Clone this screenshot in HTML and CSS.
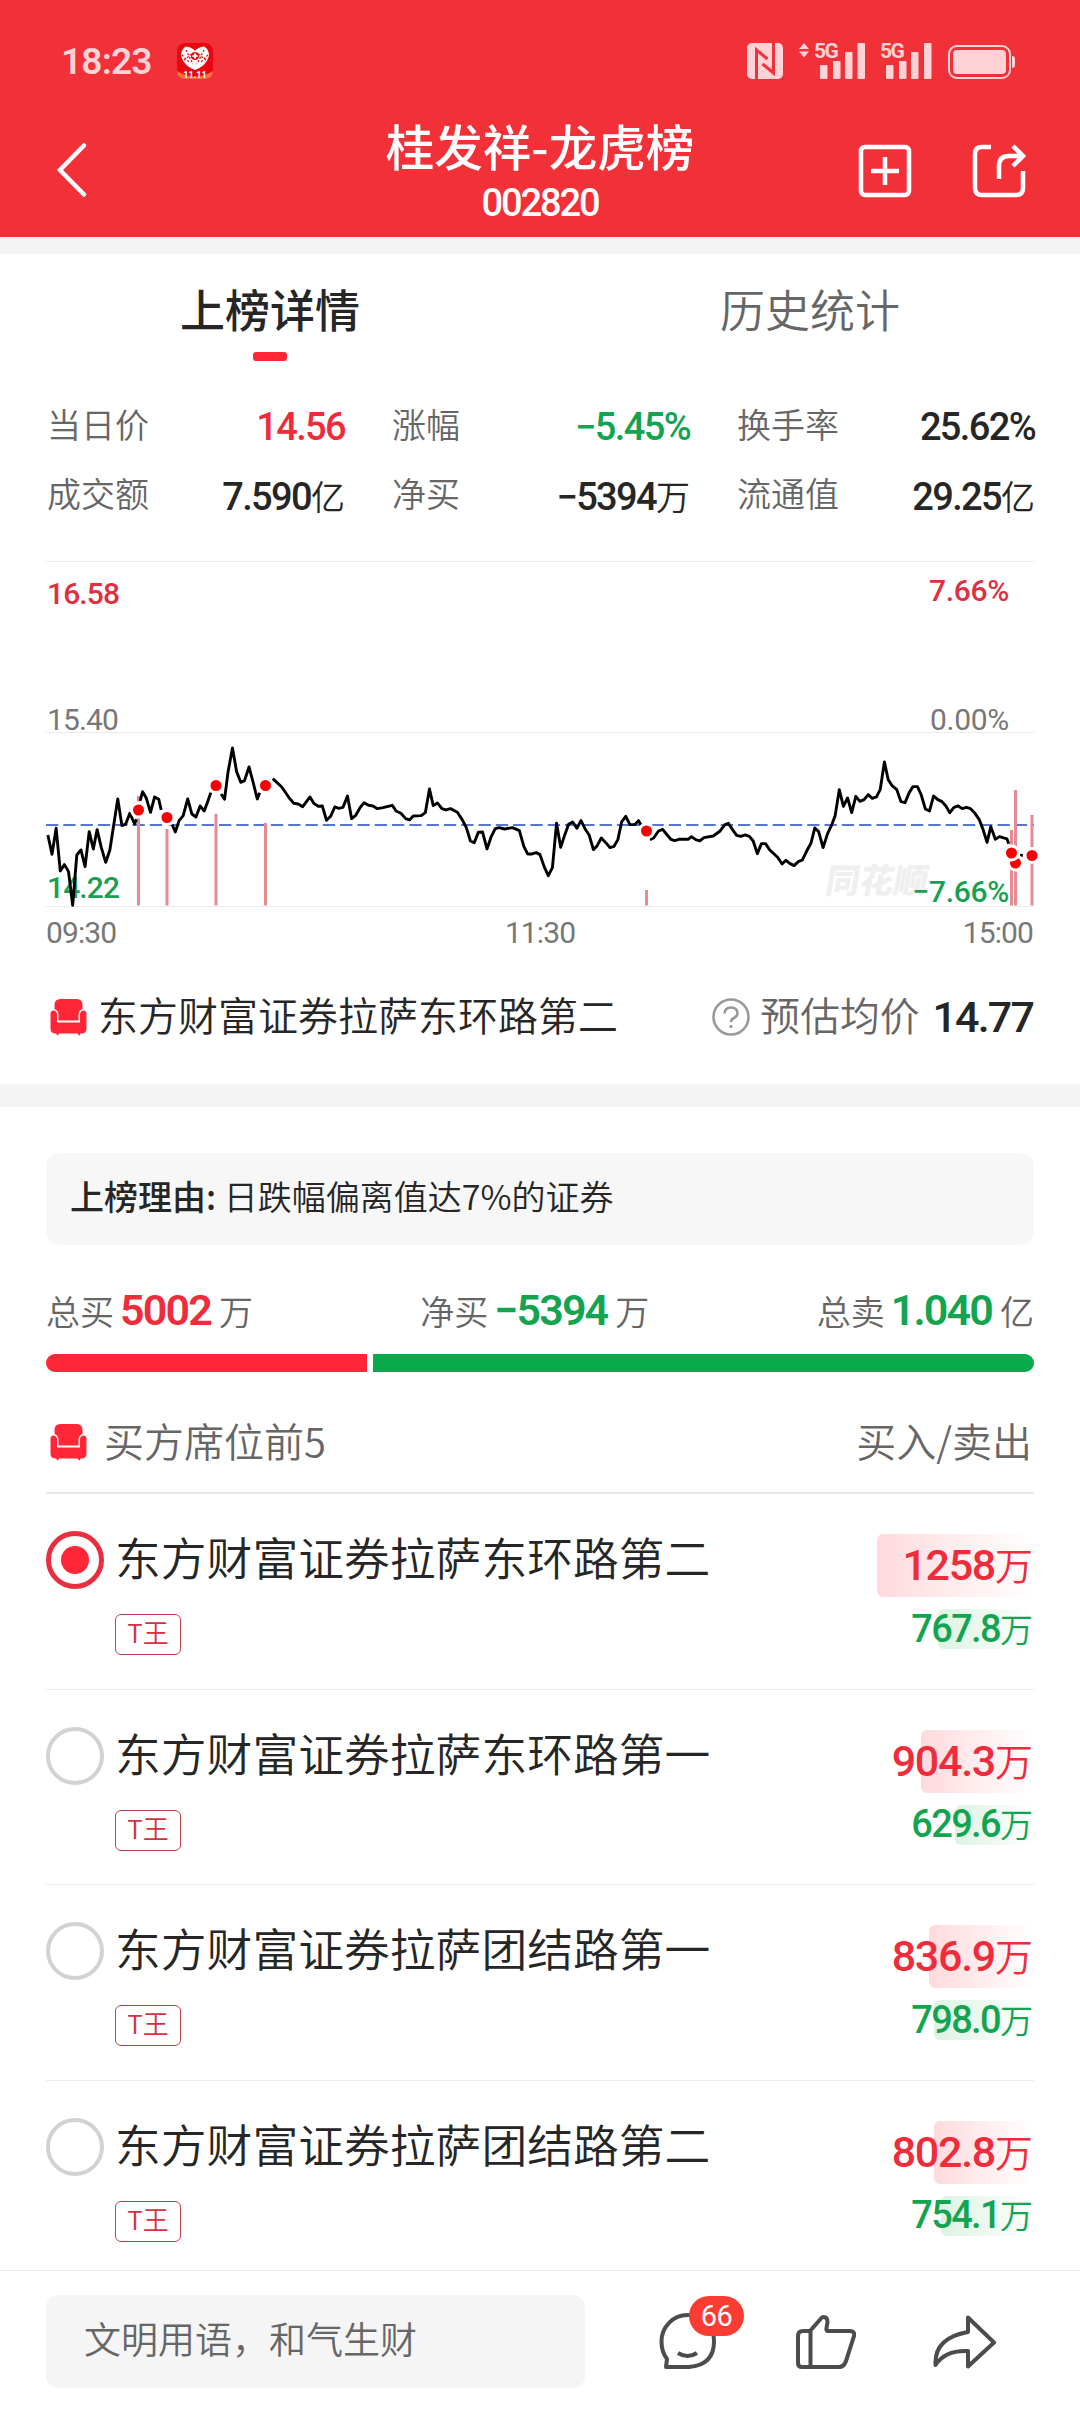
FILE: index.html
```html
<!DOCTYPE html>
<html lang="zh-CN">
<head>
  <meta charset="UTF-8" />
  <meta name="viewport" content="width=device-width, initial-scale=1.0"/>
  <title>桂发祥-龙虎榜</title>
  <link rel="stylesheet" href="styles.css">
</head>
<body>

  <svg class="symbols" width="0" height="0">
    <symbol id="seat" viewBox="0 0 37 38">
      <path d="M4.500 11V7q0-6 6-6h16q6 0 6 6v4q-4 1.500-4 6v5.500h-20V17q0-4.500-4-6z"/>
      <path d="M.5 16q0-3.500 3-3.500T7 16v8.500h23V16q.5-3.500 3.500-3.500t3 3.500v14.500q0 5-5 5h-1l-.6 1.800h-1.400l-.6-1.800h-19l-.6 1.800H6.900L6.300 35.500h-.8q-5 0-5-5z"/>
    </symbol>
  </svg>

  <header>
    <div class="status-bar">
      <div class="status-left">
        <span class="clock">18:23</span>
        <svg width="36" height="36" viewBox="0 0 36 36">
          <rect width="36" height="36" rx="8" fill="#ea0610"/>
          <path d="M0 28q18 11 36 0v1q-1 7-8 7H8q-7 0-8-7z" fill="#ff6d3c"/>
          <path d="M9 3.500Q15 4 18 8q3-4 9-4.500Q32 6 32 13q-3 10-14 14Q7 23 4 13 4 6 9 3.500z" fill="#fff"/>
          <path d="M5 12l8 8M9 7l7 14M27 7l-7 14M31 12l-8 8M7 17l9-7M29 17l-9-7" stroke="#ea0610" stroke-width="1.300" stroke-dasharray="2 1.800"/>
          <circle cx="18" cy="13" r="4" fill="#ea0610"/>
          <path d="M18 10.500v5M15.500 13h5" stroke="#fff" stroke-width="2"/>
          <text x="18" y="35" text-anchor="middle" class="app-date">11.11</text>
        </svg>
      </div>
      <div class="status-right">
        <svg width="270" height="56" viewBox="746 34 270 56" fill="#ffd2d5">
          <rect x="747" y="44" width="36" height="36" rx="5"/>
          <path d="M756.500 80V51l11 9M773.500 44v30l-11-9" fill="none" stroke="#f23038" stroke-width="3"/>
          <path d="M799 50l5-6 5 6zM799 52.500h10l-5 6z"/>
          <text x="814" y="59" class="net">5G</text>
          <rect x="820" y="66" width="7.500" height="14" rx="1"/>
          <rect x="833" y="62" width="7.500" height="18" rx="1"/>
          <rect x="845" y="53" width="7.500" height="27" rx="1"/>
          <rect x="857.500" y="44" width="7.500" height="36" rx="1"/>
          <text x="880" y="59" class="net">5G</text>
          <rect x="886" y="66" width="7.500" height="14" rx="1"/>
          <rect x="899" y="62" width="7.500" height="18" rx="1"/>
          <rect x="911" y="53" width="7.500" height="27" rx="1"/>
          <rect x="924" y="44" width="7.500" height="36" rx="1"/>
          <rect x="949" y="47" width="61" height="32" rx="8" fill="none" stroke="#ffd2d5" stroke-width="2"/>
          <rect x="953" y="51" width="53" height="24" rx="4"/>
          <path d="M1012 57q3 0 3 3v6q0 3-3 3z"/>
        </svg>
      </div>
    </div>
    <div class="nav">
      <svg class="back" width="32" height="56" viewBox="0 0 32 56"><path d="M28 3.500L4 28l24 24.500"/></svg>
      <div class="nav-title">
        <h1>桂发祥-龙虎榜</h1>
        <span class="num code">002820</span>
      </div>
      <div class="nav-actions">
        <svg width="54" height="54" viewBox="0 0 54 54">
          <rect x="3" y="3" width="48" height="48" rx="4"/>
          <path d="M27 13v28M13 27h28"/>
        </svg>
        <svg width="56" height="54" viewBox="0 0 56 54">
          <path d="M19 3H10Q3 3 3 10v34q0 7 7 7h34q7 0 7-7V27"/>
          <path d="M27 35V22q0-10 10-10h13M41 2l10 10-10 10"/>
        </svg>
      </div>
    </div>
  </header>

  <main>
    <div class="tabs">
      <div class="tab active">上榜详情</div>
      <div class="tab">历史统计</div>
    </div>

    <div class="stats">
      <div class="stat"><label>当日价</label><span class="num red">14.56</span></div>
      <div class="stat"><label>涨幅</label><span class="num green">−5.45%</span></div>
      <div class="stat"><label>换手率</label><span class="num">25.62%</span></div>
      <div class="stat"><label>成交额</label><span class="num">7.590<i>亿</i></span></div>
      <div class="stat"><label>净买</label><span class="num">−5394<i>万</i></span></div>
      <div class="stat"><label>流通值</label><span class="num">29.25<i>亿</i></span></div>
    </div>

    <svg class="chart" width="1080" height="395" viewBox="0 555 1080 395">
      <path class="grid" d="M46 561.500H1034M46 732.500H1034M46 906.500H1034"/>
      <text class="watermark" transform="translate(824 893) skewX(-10)">同花顺</text>
      <g class="axis">
        <text x="47" y="603.500" class="up">16.58</text>
        <text x="47" y="729.500">15.40</text>
        <text x="47" y="898" class="down">14.22</text>
        <text x="1009" y="601" text-anchor="end" class="up percent">7.66%</text>
        <text x="1009" y="729.500" text-anchor="end" class="percent">0.00%</text>
        <text x="1009" y="901.500" text-anchor="end" class="down percent">−7.66%</text>
        <text x="46" y="942.500">09:30</text>
        <text x="540" y="942.500" text-anchor="middle">11:30</text>
        <text x="1033" y="942.500" text-anchor="end">15:00</text>
      </g>
      <path class="avg" d="M46 825H1034"/>
      <path class="deal" d="M138.500 796V905.500M167 829V905.500M216 814V905.500M265.500 823V905.500M646.500 890V905.500M1011.500 830V905.500M1015.500 790V905.500M1032 815V905.500"/>
      <!-- morning session -->
      <g transform="translate(0 550) scale(.3444 .3333)">
        <polyline class="price" points="139,855 151,913 163,835 175,963 187,944 199,965 211,1066 223,915 235,900 247,950 259,845 271,897 282,839 294,892 307,937 319,900 331,820 342,747 354,827 365,822 377,790 391,822 396,808"/>
        <polyline class="price" points="407,753 414,725 425,745 437,787 449,741 461,748 468,780"/>
        <polyline class="price" points="500,824 509,846 520,812 532,797 545,747 557,792 569,801 581,768 593,783 604,752 612,728"/>
        <polyline class="price" points="642,732 652,748 662,667 675,594 687,665 699,697 710,692 723,651 735,697 747,747 754,728"/>
        <polyline class="price" points="792,686 818,711 840,744 853,760 866,762 879,770 900,741 912,761 924,769 936,768 948,811 960,799 972,771 984,775 996,772 1009,738 1021,806 1033,796 1045,774 1057,758 1070,766 1083,768 1096,776 1112,773 1139,766 1150,783 1164,790 1178,806 1189,810 1200,798 1223,797 1235,788 1247,717 1258,767 1270,759 1283,776 1295,780 1308,776 1328,787 1342,809 1354,833 1366,873 1377,878 1389,847 1401,846 1414,897 1426,861 1438,836 1450,833 1465,837 1488,833 1508,842 1521,889 1532,912 1545,912 1557,908 1568,914 1580,950 1592,977 1604,953 1616,820 1628,892 1640,854 1651,823 1663,816 1675,835 1687,812 1699,837 1711,856 1723,899 1734,887 1746,864 1759,878 1771,893 1783,889 1794,869 1805,816 1817,799 1829,824 1843,824 1854,812 1861,824"/>
      </g>
      <!-- afternoon session -->
      <g transform="translate(540 550) scale(.3444 .3333)">
        <polyline class="price" points="319,869 330,864 344,843 356,838 367,852 380,868 391,872 404,868 430,868 440,860 452,869 464,873 476,863 503,858 523,843 537,824 547,820 559,839 571,856 583,859 596,855 608,859 619,873 631,911 643,881 655,881 667,900 690,922 703,942 714,931 726,941 738,947 750,935 762,930 774,904 787,879 798,834 809,845 822,893 835,851 846,827 857,797 869,719 881,769 893,744 905,788 917,739 929,754 941,749 953,734 965,745 977,741 988,718 1000,636 1011,689 1023,708 1036,719 1048,755 1060,758 1072,728 1083,710 1096,710 1107,735 1119,777 1131,783 1143,738 1155,749 1166,754 1178,767 1190,788 1202,772 1214,768 1226,776 1238,772 1250,776 1263,790 1275,808 1287,840 1298,877 1309,830 1322,868 1334,860 1356,867 1361,881"/>
        <path class="price" d="M1394,916h8"/>
      </g>
      <g class="dots">
        <circle cx="138.500" cy="810" r="7"/>
        <circle cx="167" cy="817.500" r="7"/>
        <circle cx="216" cy="785.500" r="7"/>
        <circle cx="265.500" cy="785.500" r="7"/>
        <circle cx="646.500" cy="831" r="7"/>
        <circle cx="1015.500" cy="863" r="7"/>
        <circle cx="1011.500" cy="853" r="7"/>
        <circle cx="1032" cy="855.500" r="7"/>
      </g>
    </svg>

    <div class="picked">
      <svg class="seat-icon"><use href="#seat"/></svg>
      <span class="picked-name">东方财富证券拉萨东环路第二</span>
      <svg class="help" width="38" height="38" viewBox="0 0 38 38">
        <circle cx="19" cy="19" r="17.500"/>
        <path d="M12.500 15.500q.5-6 6.500-6t6.500 5.500q0 3-3.500 5-3 1.500-3 4M19 27v3"/>
      </svg>
      <span class="picked-label">预估均价</span>
      <b class="num">14.77</b>
    </div>

    <div class="reason"><b>上榜理由:</b> 日跌幅偏离值达7%的证券</div>

    <div class="totals">
      <div>总买<b class="num red">5002</b>万</div>
      <div>净买<b class="num green">−5394</b>万</div>
      <div>总卖<b class="num green">1.040</b>亿</div>
    </div>
    <div class="ratio">
      <span class="ratio-buy" style="width: 321px"></span>
      <span class="ratio-sell"></span>
    </div>

    <div class="list-head">
      <svg class="seat-icon"><use href="#seat"/></svg>
      <span>买方席位前5</span>
      <span class="list-head-right">买入/卖出</span>
    </div>

    <div class="seats">
      <div class="seat">
        <span class="radio checked"></span>
        <div class="seat-info">
          <h2>东方财富证券拉萨东环路第二</h2>
          <span class="tag">T王</span>
        </div>
        <div class="amounts">
          <div class="num buy"><span class="bar" style="width: 157px"></span><em>1258<i>万</i></em></div>
          <div class="num sell"><span class="bar" style="width: 96px"></span><em>767.8<i>万</i></em></div>
        </div>
      </div>
      <div class="seat">
        <span class="radio"></span>
        <div class="seat-info">
          <h2>东方财富证券拉萨东环路第一</h2>
          <span class="tag">T王</span>
        </div>
        <div class="amounts">
          <div class="num buy"><span class="bar" style="width: 113px"></span><em>904.3<i>万</i></em></div>
          <div class="num sell"><span class="bar" style="width: 79px"></span><em>629.6<i>万</i></em></div>
        </div>
      </div>
      <div class="seat">
        <span class="radio"></span>
        <div class="seat-info">
          <h2>东方财富证券拉萨团结路第一</h2>
          <span class="tag">T王</span>
        </div>
        <div class="amounts">
          <div class="num buy"><span class="bar" style="width: 105px"></span><em>836.9<i>万</i></em></div>
          <div class="num sell"><span class="bar" style="width: 100px"></span><em>798.0<i>万</i></em></div>
        </div>
      </div>
      <div class="seat">
        <span class="radio"></span>
        <div class="seat-info">
          <h2>东方财富证券拉萨团结路第二</h2>
          <span class="tag">T王</span>
        </div>
        <div class="amounts">
          <div class="num buy"><span class="bar" style="width: 100px"></span><em>802.8<i>万</i></em></div>
          <div class="num sell"><span class="bar" style="width: 93px"></span><em>754.1<i>万</i></em></div>
        </div>
      </div>
    </div>
  </main>

  <footer>
    <div class="comment-box">文明用语，和气生财</div>
    <div class="actions">
      <div class="action">
        <svg width="60" height="60" viewBox="0 0 60 60">
          <path d="M8 56l1-8Q3.500 41 3.500 30.500A26 26.500 0 0 1 30 4a26 26 0 0 1 26 26.500Q56 54 31 56z"/>
          <path d="M20 42q9.500 6 19 0"/>
        </svg>
        <span class="badge">66</span>
      </div>
      <svg width="60" height="56" viewBox="0 0 60 56">
        <path d="M14 17h-7q-5 0-5 5v27q0 4 4 4h37q5 0 7-6l8-25q1-5-4-5H32q-2 0-1.500-3l1-6q0-5-4-5Q26 3 25 4.500L14 17M14.500 17v36"/>
      </svg>
      <svg width="64" height="56" viewBox="0 0 64 56">
        <path d="M35 3.500L61 28.500 35 52.500V37Q12 36 2.500 51 1 24 35 18z"/>
      </svg>
    </div>
  </footer>

</body>
</html>
```
FILE: styles.css
```css
* { box-sizing: border-box; }

body {
  margin: 0;
  width: 1080px;
  height: 2412px;
  display: flex;
  flex-direction: column;
  overflow: hidden;
  font-family: "Noto Sans CJK SC", sans-serif;
  font-weight: 350;
  background: #fff;
  color: #262626;
}

h1, h2 { margin: 0; }
i, em { font-style: normal; }
svg { display: block; flex: none; }
.symbols { position: absolute; }

.num, .clock, .badge, svg text {
  font-family: Roboto, "Noto Sans CJK SC", sans-serif;
}
.num {
  font-weight: 500;
  letter-spacing: -0.043em;
}
.num i {
  font-weight: 350;
  letter-spacing: 0;
}
.red { color: #ee2c3c; }
.green { color: #12a451; }

/* header */
header {
  height: 237px;
  background: #f23038;
  color: #fff;
}

.status-bar {
  height: 122px;
  padding: 0 64px 0 61px;
  display: flex;
  align-items: center;
  justify-content: space-between;
}
.status-left {
  display: flex;
  align-items: center;
  gap: 24px;
}
.clock {
  font-size: 37px;
  font-weight: 600;
  width: 92px;
  letter-spacing: -0.800px;
  color: #ffd2d5;
}
.app-date {
  font-size: 9px;
  font-weight: 700;
  fill: #fff;
}
.net {
  font-size: 21px;
  font-weight: 700;
  letter-spacing: -1.500px;
}

.nav {
  height: 115px;
  display: grid;
  grid-template-columns: 250px 1fr 250px;
  padding: 0 26px 0 56px;
}
.nav svg {
  fill: none;
  stroke: #fff;
  stroke-width: 4.500;
}
.back {
  margin-top: 20px;
}
.back path { stroke-linecap: round; }
.nav-title {
  display: flex;
  flex-direction: column;
  align-items: center;
  margin: 0 -30px 0 -60px;
}
h1 {
  font-size: 48.500px;
  font-weight: 500;
  line-height: 60px;
  margin: -7px 0 3px;
  white-space: nowrap;
}
.code {
  font-size: 38px;
  line-height: 50px;
  letter-spacing: -0.055em;
}
.nav-actions {
  display: flex;
  justify-content: flex-end;
  gap: 60px;
  padding: 22px 26px 0 0;
}

/* tabs */
main {
  flex: 1;
  min-height: 0;
  overflow: hidden;
  border-top: 17px solid #f4f4f4;
}
.tabs {
  display: flex;
  height: 138px;
}
.tab {
  flex: 1;
  display: flex;
  flex-direction: column;
  align-items: center;
  padding-top: 25px;
  font-size: 45px;
  line-height: 60px;
  color: #666;
}
.tab.active {
  font-weight: 500;
  color: #262626;
}
.tab.active::after {
  content: "";
  width: 34px;
  height: 9px;
  margin-top: 13px;
  border-radius: 3px;
  background: #ff2638;
}

/* quote numbers */
.stats {
  display: grid;
  grid-template-columns: repeat(3, 299px);
  column-gap: 46px;
  padding: 0 46px;
}
.stat {
  height: 69px;
  display: flex;
  align-items: center;
  justify-content: space-between;
  font-size: 38px;
}
.stat label {
  padding: 0 0 6px 1px;
  font-size: 34px;
  line-height: 50px;
  color: #666;
}
.stat i { font-size: 34px; }

/* intraday chart */
.chart {
  margin-top: 25px;
}
.grid { stroke: #ececec; }
.axis text {
  font-size: 30px;
  font-weight: 400;
  letter-spacing: -0.900px;
  fill: #777;
}
.axis .up { fill: #e02f3f; font-weight: 500; }
.axis .down { fill: #1a9f52; font-weight: 500; }
.axis .percent { letter-spacing: -0.300px; }
.watermark {
  font-size: 34px;
  font-weight: 900;
  fill: #efefef;
}
.avg {
  stroke: #5477d3;
  stroke-width: 2;
  stroke-dasharray: 12.300 5;
}
.deal {
  stroke: #e88a92;
  stroke-width: 3;
}
.price {
  fill: none;
  stroke: #000;
  stroke-width: 2.900;
  stroke-linejoin: round;
  vector-effect: non-scaling-stroke;
}
.dots circle {
  fill: #f80000;
  stroke: #fff;
  stroke-width: 3;
}

.seat-icon {
  width: 37px;
  height: 38px;
  fill: #ff2638;
}
.picked {
  box-sizing: content-box;
  height: 134px;
  padding: 0 47px 0 50px;
  margin-bottom: 46px;
  border-bottom: 23px solid #f4f4f4;
  display: flex;
  align-items: center;
  font-size: 40px;
  line-height: 60px;
}
.picked-name {
  margin: 0 auto 0 11px;
  padding-bottom: 6px;
}
.picked-label {
  margin: 0 13px 0 10px;
  padding-bottom: 6px;
  font-size: 39.800px;
  color: #666;
}
.picked b { font-size: 43px; }
.help {
  fill: none;
  stroke: #999;
  stroke-width: 2.600;
}

/* reason + totals */
.reason {
  margin: 0 46px;
  height: 92px;
  padding-left: 24px;
  line-height: 86px;
  border-radius: 14px;
  background: #f7f7f7;
  font-size: 34px;
}
.reason b { font-weight: 500; }
.totals {
  height: 109px;
  padding: 25px 46px 0;
  display: flex;
  justify-content: space-between;
  font-size: 34px;
  line-height: 80px;
  color: #666;
}
.totals b {
  margin: 0 8px 0 6px;
  font-size: 43px;
  font-weight: 600;
}
.ratio {
  margin: 0 46px;
  height: 18px;
  display: flex;
  gap: 6px;
}
.ratio-buy {
  background: #ff2638;
  border-radius: 9px 0 0 9px;
}
.ratio-sell {
  flex: 1;
  background: #09aa4b;
  border-radius: 0 9px 9px 0;
}

/* seat list */
.list-head {
  margin: 0 46px;
  height: 122px;
  padding: 20px 2px 0 4px;
  border-bottom: 2px solid #e7e7e7;
  display: flex;
  align-items: center;
  gap: 17px;
  font-size: 40px;
  line-height: 60px;
  color: #666;
}
.list-head span { padding-bottom: 5px; }
.list-head-right { margin-left: auto; }

.seats { margin: 0 46px; }
.seat {
  height: 195.670px;
  padding-top: 34px;
  border-bottom: 1px solid #ececec;
  display: flex;
  align-items: flex-start;
}
.radio {
  width: 58px;
  height: 58px;
  margin-top: 3px;
  border: 4px solid #d2d2d2;
  border-radius: 50%;
}
.radio.checked {
  border: 5px solid #e92f3f;
  padding: 10px;
  background: #ff2638;
  background-clip: content-box;
}
.seat-info {
  flex: 1;
  margin-left: 11px;
}
h2 {
  font-size: 45.800px;
  font-weight: 350;
  line-height: 56px;
}
.tag {
  display: block;
  width: 66px;
  height: 41px;
  margin-top: 30px;
  border: 1px solid #c0404c;
  border-radius: 6px;
  text-align: center;
  font-size: 26px;
  line-height: 34px;
  color: #d8303f;
}

.amounts {
  width: 160px;
  margin-top: 6px;
}
.buy, .sell {
  position: relative;
  display: flex;
  align-items: center;
  justify-content: flex-end;
}
.buy {
  height: 63px;
  margin-bottom: 12px;
  font-size: 43px;
  line-height: 50px;
  letter-spacing: -0.030em;
  color: #ee2c3c;
}
.buy i { font-size: 38px; }
.sell {
  height: 40px;
  font-size: 38px;
  line-height: 42px;
  color: #12a451;
}
.sell i { font-size: 33px; }
/* share of turnover, drawn behind the number */
.bar {
  position: absolute;
  top: 0;
  right: 0;
  height: 100%;
  border-radius: 6px 0 0 6px;
  background: linear-gradient(90deg, #ffdadd, #fff);
}
.sell .bar { background: linear-gradient(90deg, #dcf3e2, #fff); }
em {
  position: relative;
  padding: 1px 1px 0 0;
}

/* bottom bar */
footer {
  height: 142px;
  padding: 24px 84px 0 46px;
  border-top: 1px solid #e9e9e9;
  background: #fff;
  display: flex;
  justify-content: space-between;
}
.comment-box {
  width: 539px;
  height: 93px;
  padding-left: 38px;
  line-height: 86px;
  border-radius: 12px;
  background: #f5f5f5;
  font-size: 37px;
  color: #666;
}
.actions {
  display: flex;
  gap: 77px;
  padding-top: 18px;
}
.actions svg {
  fill: none;
  stroke: #4c4c4c;
  stroke-width: 4;
  stroke-linejoin: round;
}
.actions > svg { margin: 1px -1px 0 1px; }
.action { position: relative; margin-top: -2px; }
.badge {
  position: absolute;
  left: 31px;
  top: -15px;
  width: 55px;
  height: 40px;
  border-radius: 20px;
  background: #fa3c32;
  color: #fff;
  font-size: 29px;
  font-weight: 400;
  line-height: 41px;
  letter-spacing: -0.500px;
  text-align: center;
}
```
